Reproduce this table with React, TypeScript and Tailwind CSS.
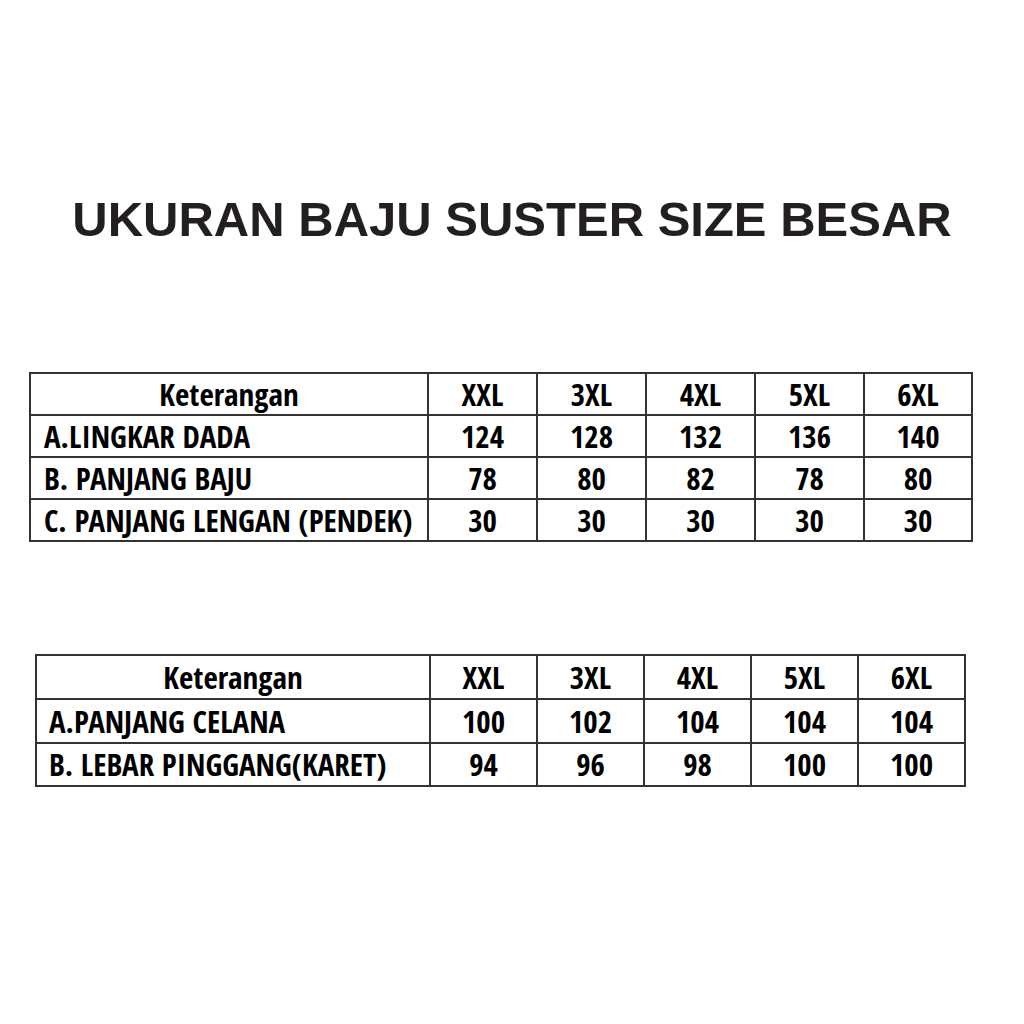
const sizes = ["XXL", "3XL", "4XL", "5XL", "6XL"]

const bajuRows = [
  { label: "A.LINGKAR DADA", values: ["124", "128", "132", "136", "140"] },
  { label: "B. PANJANG BAJU", values: ["78", "80", "82", "78", "80"] },
  { label: "C. PANJANG LENGAN (PENDEK)", values: ["30", "30", "30", "30", "30"] },
]

const celanaRows = [
  { label: "A.PANJANG CELANA", values: ["100", "102", "104", "104", "104"] },
  { label: "B. LEBAR PINGGANG(KARET)", values: ["94", "96", "98", "100", "100"] },
]

export default function App() {
  return (
    <div className="min-h-screen w-[1024px] bg-white text-black flex flex-col">
      {/* judul */}
      <h1 className="mt-[195px] text-center text-[49px] leading-none font-bold text-[#231f20] font-['Liberation_Sans',Arial,sans-serif]">
        UKURAN BAJU SUSTER SIZE BESAR
      </h1>

      {/* tabel baju */}
      <div className="mt-[128px] ml-[29px] w-[944px] border-l-2 border-t-2 border-[#333] font-['Open_Sans_Condensed',sans-serif] font-bold text-[31px] leading-none">
        <div className="grid grid-cols-[398px_109px_109px_109px_109px_108px]">
          <div className="h-[42px] border-r-2 border-b-2 border-[#333] flex items-center justify-center">Keterangan</div>
          {sizes.map((s) => (
            <div key={s} className="h-[42px] border-r-2 border-b-2 border-[#333] flex items-center justify-center">
              {s}
            </div>
          ))}
          {bajuRows.map((row) => (
            <div key={row.label} className="contents">
              <div className="h-[42px] border-r-2 border-b-2 border-[#333] flex items-center pl-[13px]">{row.label}</div>
              {row.values.map((v, i) => (
                <div key={i} className="h-[42px] border-r-2 border-b-2 border-[#333] flex items-center justify-center">
                  {v}
                </div>
              ))}
            </div>
          ))}
        </div>
      </div>

      {/* tabel celana */}
      <div className="mt-[112px] ml-[35px] w-[931px] border-l-2 border-t-2 border-[#333] font-['Open_Sans_Condensed',sans-serif] font-bold text-[31px] leading-none">
        <div className="grid grid-cols-[394px_107px_107px_107px_107px_107px]">
          <div className="h-[44px] border-r-2 border-b-2 border-[#333] flex items-center justify-center">Keterangan</div>
          {sizes.map((s) => (
            <div key={s} className="h-[44px] border-r-2 border-b-2 border-[#333] flex items-center justify-center">
              {s}
            </div>
          ))}
          {celanaRows.map((row, r) => (
            <div key={row.label} className="contents">
              <div className={`${r === 1 ? "h-[43px]" : "h-[44px]"} border-r-2 border-b-2 border-[#333] flex items-center pl-[12px]`}>
                {row.label}
              </div>
              {row.values.map((v, i) => (
                <div
                  key={i}
                  className={`${r === 1 ? "h-[43px]" : "h-[44px]"} border-r-2 border-b-2 border-[#333] flex items-center justify-center`}
                >
                  {v}
                </div>
              ))}
            </div>
          ))}
        </div>
      </div>
    </div>
  )
}
